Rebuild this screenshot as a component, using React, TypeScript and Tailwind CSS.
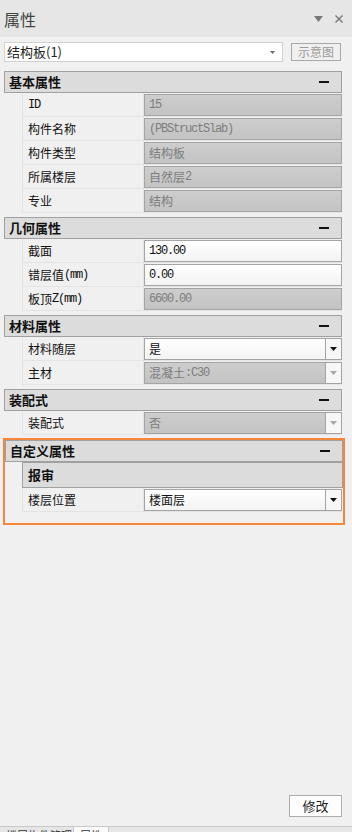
import React from "react";

const CJK = { fontFamily: '"Noto Sans CJK SC", sans-serif' };

type Row = {
  label: string;
  value: string;
  disabled?: boolean;
  select?: boolean;
};

// Render ASCII runs in a narrow monospace (like SimSun half-width glyphs)
function Mixed({ text }: { text: string }) {
  const parts = text.split(/([\x20-\x7e]+)/).filter((p) => p.length > 0);
  return (
    <>
      {parts.map((p, i) =>
        /^[\x20-\x7e]+$/.test(p) ? (
          <span
            key={i}
            className="tracking-[-1.2px] text-[12px]"
            style={{ fontFamily: '"Liberation Mono", monospace' }}
          >
            {p}
          </span>
        ) : (
          <span key={i} style={CJK}>
            {p}
          </span>
        )
      )}
    </>
  );
}

function Arrow({ dim }: { dim?: boolean }) {
  return (
    <svg width="7" height="4" viewBox="0 0 7 4">
      <path d="M0 0 H7 L3.5 4 Z" fill={dim ? "#a8a8a8" : "#111"} />
    </svg>
  );
}

function Field({ row }: { row: Row }) {
  const base = row.disabled
    ? "bg-gradient-to-b from-[#cdcdcd] to-[#c3c3c3] text-[#7d7d7d]"
    : "bg-gradient-to-b from-[#ffffff] to-[#f3f3f3] text-[#111]";
  return (
    <div
      className={`h-[22px] w-[198px] border border-[#a4a4a4] flex items-stretch ${base}`}
    >
      <div className="flex-1 flex items-center pl-[4px] text-[12px] leading-none whitespace-nowrap overflow-hidden">
        <Mixed text={row.value} />
      </div>
      {row.select && (
        <div className="w-[16px] border-l border-[#a4a4a4] bg-[#f7f7f7] flex items-center justify-center">
          <Arrow dim={row.disabled} />
        </div>
      )}
    </div>
  );
}

function Rows({ rows }: { rows: Row[] }) {
  return (
    <div className="w-[320px]">
      {rows.map((r) => (
        <div key={r.label} className="h-[24px] flex border-b border-[#e4e4e4]">
          <div className="w-[122px] shrink-0 border-r border-l border-[#e4e4e4] flex items-center pl-[5px] text-[12px] text-[#111] whitespace-nowrap">
            <Mixed text={r.label} />
          </div>
          <div className="flex-1 flex items-center">
            <Field row={r} />
          </div>
        </div>
      ))}
    </div>
  );
}

function Header({ title }: { title: string }) {
  return (
    <div className="h-[22px] w-[338px] border border-[#a0a0a0] bg-[#dcdcdc] flex items-center justify-between pl-[4px] pr-[12px]">
      <span className="text-[13px] font-bold text-[#111]" style={CJK}>
        {title}
      </span>
      <span className="block w-[10px] h-[2px] bg-[#111]" />
    </div>
  );
}

function Section({ title, rows }: { title: string; rows: Row[] }) {
  return (
    <div className="ml-[4px] mb-[4px] shrink-0">
      <Header title={title} />
      <div className="ml-[18px]">
        <Rows rows={rows} />
      </div>
    </div>
  );
}

export default function App() {
  return (
    <div
      className="w-[352px] h-[832px] bg-[#f0f0f0] flex flex-col overflow-hidden relative"
      style={CJK}
    >
      {/* title bar */}
      <div className="h-[37px] bg-[#e6e6e6] flex items-center justify-between pl-[4px] pr-[9px] shrink-0">
        <span className="text-[16px] text-[#444]" style={CJK}>
          属性
        </span>
        <div className="flex items-center gap-[12px]">
          <svg width="9" height="6" viewBox="0 0 9 6">
            <path d="M0 0 H9 L4.5 6 Z" fill="#777" />
          </svg>
          <svg width="8" height="8" viewBox="0 0 8 8">
            <path d="M0.5 0.5 L7.5 7.5 M7.5 0.5 L0.5 7.5" stroke="#777" strokeWidth="1.4" />
          </svg>
        </div>
      </div>

      {/* combo row */}
      <div className="flex items-center pl-[4px] pt-[5px] pb-[9px] shrink-0">
        <div className="w-[279px] h-[20px] bg-white border border-[#d2d2d2] flex items-center justify-between pl-[2px] pr-[7px]">
          <span className="text-[13px] text-[#222]" style={CJK}>
            结构板(1)
          </span>
          <svg width="5" height="3" viewBox="0 0 5 3">
            <path d="M0 0 H5 L2.5 3 Z" fill="#666" />
          </svg>
        </div>
        <div className="ml-[8px] w-[50px] h-[18px] border border-[#a8a8a8] flex items-center justify-center text-[12px] text-[#9a9a9a]">
          示意图
        </div>
      </div>

      <Section
        title="基本属性"
        rows={[
          { label: "ID", value: "15", disabled: true },
          { label: "构件名称", value: "(PBStructSlab)", disabled: true },
          { label: "构件类型", value: "结构板", disabled: true },
          { label: "所属楼层", value: "自然层2", disabled: true },
          { label: "专业", value: "结构", disabled: true },
        ]}
      />
      <Section
        title="几何属性"
        rows={[
          { label: "截面", value: "130.00" },
          { label: "错层值(mm)", value: "0.00" },
          { label: "板顶Z(mm)", value: "6600.00", disabled: true },
        ]}
      />
      <Section
        title="材料属性"
        rows={[
          { label: "材料随层", value: "是", select: true },
          { label: "主材", value: "混凝土:C30", disabled: true, select: true },
        ]}
      />
      <Section
        title="装配式"
        rows={[{ label: "装配式", value: "否", disabled: true, select: true }]}
      />

      {/* custom section with orange highlight */}
      <div className="-mt-[1px] ml-[3px] w-[342px] border-[2px] border-[#f5873a] pb-[11px] shrink-0">
        <Header title="自定义属性" />
        <div className="ml-[17px] w-[321px] h-[26px] border border-[#a0a0a0] bg-[#dcdcdc] flex items-center pl-[5px]">
          <span className="text-[13px] font-bold text-[#111]">报审</span>
        </div>
        <div className="ml-[17px]">
          <Rows rows={[{ label: "楼层位置", value: "楼面层", select: true }]} />
        </div>
      </div>

      <div className="flex-1" />

      {/* bottom button */}
      <div className="flex justify-end pr-[10px] pb-[9px] shrink-0">
        <div className="w-[53px] h-[22px] border border-[#adadad] bg-[#fdfdfd] flex items-center justify-center text-[13px] text-[#222]">
          修改
        </div>
      </div>

      {/* tab strip */}
      <div className="h-[6px] border-t border-[#c8c8c8] bg-[#e6e6e6] flex items-start shrink-0 overflow-hidden">
        <div className="w-[73px] h-[6px] pl-[6px] pt-[2px] text-[11px] leading-[12px] text-[#333] whitespace-nowrap overflow-hidden">
          楼层构件管理
        </div>
        <div className="w-[36px] h-[6px] bg-[#fafafa] border-x border-[#c8c8c8] pl-[6px] pt-[2px] text-[11px] leading-[12px] text-[#333] whitespace-nowrap overflow-hidden">
          属性
        </div>
      </div>
    </div>
  );
}
